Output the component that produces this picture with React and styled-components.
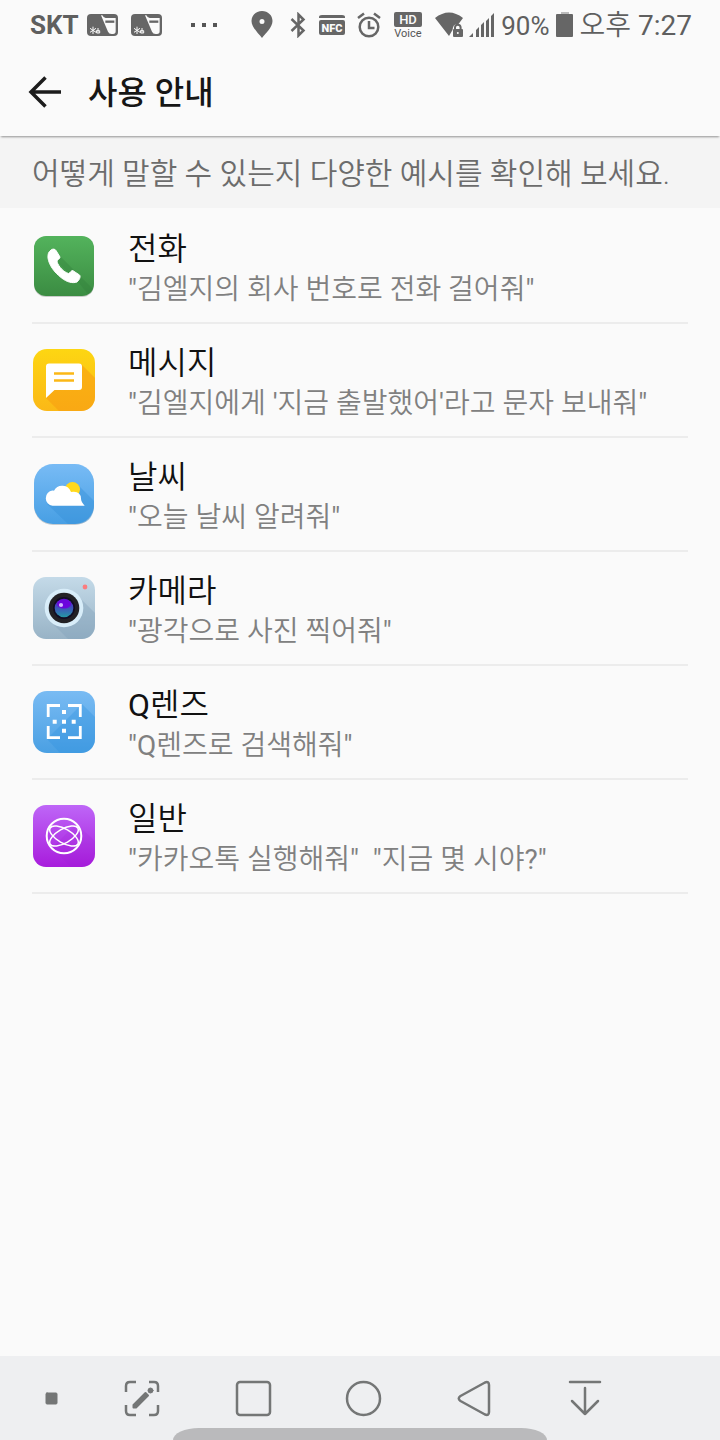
import React from 'react'
import styled, { createGlobalStyle } from 'styled-components'

const examples = [
  { id: 'phone', title: '전화', text: '"김엘지의 회사 번호로 전화 걸어줘"' },
  {
    id: 'message',
    title: '메시지',
    text: '"김엘지에게 \'지금 출발했어\'라고 문자 보내줘"',
  },
  { id: 'weather', title: '날씨', text: '"오늘 날씨 알려줘"' },
  { id: 'camera', title: '카메라', text: '"광각으로 사진 찍어줘"' },
  { id: 'qlens', title: 'Q렌즈', text: '"Q렌즈로 검색해줘"' },
  {
    id: 'general',
    title: '일반',
    text: '"카카오톡 실행해줘"\u00a0 "지금 몇 시야?"',
  },
]

const Gradient = ({ id, from, to }) => (
  <defs>
    <linearGradient id={id} x1='0' y1='0' x2='0' y2='1'>
      <stop offset='0' stopColor={from} />
      <stop offset='1' stopColor={to} />
    </linearGradient>
    <clipPath id={`${id}-clip`}>
      <rect x='1' y='1' width='62' height='62' rx='14' />
    </clipPath>
  </defs>
)

const appIcons = {
  phone: (
    <>
      <Gradient id='phone' from='#53b35c' to='#3b8c42' />
      <rect x='2' y='3' width='60' height='60' rx='12' fill='#c9cbc9' />
      <rect x='2' y='2' width='60' height='60' rx='12' fill='url(#phone)' />
      <path
        d='M27 21L61 55Q60 60 56 60L46 48L25 28Z'
        fill='#2f7a39'
        opacity='.3'
      />
      <path
        d='M19 16C21 14.5 23 15 24 16.5L28 23C28.5 24.5 24.5 26 25 28C27 33 31.5 38 36.5 39.5C38.5 39 39 36 41 36.7L47.5 41C49 42.5 47.5 46 45 48C41 49.5 35 48.5 29 43.5C22 38 17 31 16 24C15.7 20 16.5 18 19 16Z'
        fill='#fff'
        stroke='#fff'
        strokeLinejoin='round'
      />
    </>
  ),
  message: (
    <>
      <Gradient id='message' from='#fdd612' to='#fbb817' />
      <rect x='1' y='1' width='62' height='62' rx='14' fill='url(#message)' />
      <path
        d='M49 16L64 31V64H28L14 50L23 41Z'
        fill='#f99f12'
        opacity='.6'
        clipPath='url(#message-clip)'
      />
      <path
        d='M17 15.5H47Q50 15.5 50 18.500V39Q50 42 47 42H22.500L14 50V18.500Q14 15.500 17 15.500Z'
        fill='#fff'
      />
      <path d='M22 25.500H42M22 32.500H42' stroke='#fbb817' strokeWidth='2.500' />
    </>
  ),
  weather: (
    <>
      <Gradient id='weather' from='#78bbf5' to='#479fe4' />
      <rect x='2' y='3' width='60' height='60' rx='19' fill='#c5cbd0' />
      <rect x='2' y='2' width='60' height='60' rx='19' fill='url(#weather)' />
      <path
        d='M46 23L62 39V44Q61 62 44 62H36L15 42Z'
        fill='#348fd8'
        opacity='.4'
      />
      <circle cx='40.5' cy='27.500' r='7.500' fill='#ffd91c' />
      <path
        d='M20.500 43.700A7.600 7.600 0 0 1 20.500 28.600Q21 28.500 22 28.700A9.300 9.300 0 0 1 39 30Q48.500 28.500 49 36.500Q49 40 52.700 43.700Z'
        fill='#fff'
      />
    </>
  ),
  camera: (
    <>
      <Gradient id='camera' from='#c4dae8' to='#98b3c6' />
      <Gradient id='lens' from='#5b12d0' to='#2499a4' />
      <rect x='1' y='1' width='62' height='62' rx='13' fill='url(#camera)' />
      <path
        d='M45 19L64 38V64H37L18 45Z'
        fill='#7f9fb8'
        opacity='.35'
        clipPath='url(#camera-clip)'
      />
      <circle cx='32' cy='32' r='19.300' fill='#d8edf9' />
      <circle cx='32' cy='32' r='15.300' fill='#222125' />
      <circle cx='32' cy='32' r='11' fill='#120d25' />
      <circle cx='32' cy='32' r='9.300' fill='url(#lens)' />
      <ellipse cx='32' cy='28' rx='7' ry='4.500' fill='#6b05dd' />
      <circle cx='29' cy='29' r='2.100' fill='#d3b7ff' />
      <circle cx='53' cy='11' r='2.400' fill='#fb7c7e' />
    </>
  ),
  qlens: (
    <>
      <Gradient id='qlens' from='#79bbf3' to='#4aa0e3' />
      <rect x='1' y='1' width='62' height='62' rx='14' fill='url(#qlens)' />
      <path
        d='M50 14L64 28V64H29L15 49Z'
        fill='#3292df'
        opacity='.35'
        clipPath='url(#qlens-clip)'
      />
      <path
        d='M28 15.500H16.200V27M36 15.500H48.300V27M16.200 36V47.700H28M48.300 36V47.700H36'
        fill='none'
        stroke='#fff'
        strokeWidth='2.800'
      />
      <path
        d='M30 20h4v4h-4zM20.700 29.700h4v4h-4zM30 29.700h4v4h-4zM39.700 29.700h4v4h-4zM30 38.700h4v4h-4z'
        fill='#fff'
      />
    </>
  ),
  general: (
    <>
      <Gradient id='general' from='#be66f7' to='#a81cdc' />
      <rect x='1' y='1' width='62' height='62' rx='13' fill='url(#general)' />
      <path
        d='M44 20L63 37V64H40L20 44Z'
        fill='#9c1ad0'
        opacity='.15'
        clipPath='url(#general-clip)'
      />
      <g fill='none' stroke='#fff'>
        <circle cx='32' cy='32' r='17.300' strokeWidth='2' />
        <g strokeWidth='1.500'>
          <ellipse
            cx='32'
            cy='32'
            rx='16'
            ry='7'
            transform='rotate(30 32 32)'
          />
          <ellipse
            cx='32'
            cy='32'
            rx='16'
            ry='7'
            transform='rotate(-30 32 32)'
          />
        </g>
      </g>
    </>
  ),
}

const CardNotice = () => (
  <svg width='31' height='22' viewBox='0 0 93 66' aria-hidden='true'>
    <rect width='93' height='66' rx='12' fill='#666' />
    <path
      d='M42 4H46Q50 12 56 12H86V52Q86 60 78 60H74Q66 60 63 53Z'
      fill='#fafafa'
    />
    <path d='M55 23H82' stroke='#666' strokeWidth='7' />
    <path
      d='M18 38V60M9 43L27 55M27 43L9 55M33 42V56M28 50H38V57H29Z'
      fill='none'
      stroke='#fafafa'
      strokeWidth='3'
    />
  </svg>
)

const StatusIcons = () => (
  <Group $gap={12}>
    <svg width='28' height='28' viewBox='0 0 28 28' aria-hidden='true'>
      <path
        fillRule='evenodd'
        d='M13 0C7 0 2.500 4.400 2.500 10C2.500 16 9 22 13 27C17 22 23.500 16 23.500 10C23.500 4.400 19 0 13 0ZM13 8a2.500 2.500 0 1 1 0 5a2.500 2.500 0 0 1 0-5Z'
        fill='#666'
      />
    </svg>
    <svg width='18' height='26' viewBox='0 0 18 26' aria-hidden='true'>
      <path
        d='M2.500 7L14.500 18.500L9.500 23.500V2.500L14.500 7.500L2.500 19'
        fill='none'
        stroke='#666'
        strokeWidth='2.500'
      />
    </svg>
    <svg width='26' height='22' viewBox='0 0 26 22' aria-hidden='true'>
      <path d='M0 4V3Q0 1 3 1H23Q26 1 26 3V4Z' fill='#666' />
      <rect y='6' width='26' height='15' rx='2' fill='#666' />
      <text
        x='13'
        y='18'
        textAnchor='middle'
        fontSize='11'
        fontWeight='900'
        fill='#fafafa'
      >
        NFC
      </text>
    </svg>
    <svg width='24' height='26' viewBox='0 0 24 26' aria-hidden='true'>
      <g fill='none' stroke='#666' strokeWidth='2.500'>
        <circle cx='12' cy='15' r='9.300' />
        <path d='M1 6L7 1.500M17 1.500L23 6M12 9V16H17.500' />
      </g>
    </svg>
    <svg width='30' height='28' viewBox='0 0 30 28' aria-hidden='true'>
      <rect x='1' y='1' width='28' height='15' rx='2' fill='#666' />
      <text
        x='15'
        y='13'
        textAnchor='middle'
        fontSize='13'
        fontWeight='500'
        fill='#fafafa'
      >
        HD
      </text>
      <text x='15' y='26' textAnchor='middle' fontSize='11' fill='#555'>
        Voice
      </text>
    </svg>
    <Group $gap={6}>
      <svg width='28' height='26' viewBox='0 0 28 26' aria-hidden='true'>
        <path d='M0 6Q14 -5 28 6L23.500 12Q18 11 17.500 18L14 24Z' fill='#666' />
        <path
          d='M20 18V15.500A2.800 2.800 0 0 1 25.600 15.500V18'
          fill='none'
          stroke='#666'
          strokeWidth='2'
        />
        <rect x='18' y='17' width='10' height='8' rx='1' fill='#666' />
        <circle cx='22.800' cy='21' r='1' fill='#fafafa' />
      </svg>
      <svg width='26' height='26' viewBox='0 0 26 26' aria-hidden='true'>
        <path
          d='M0 25L4 21V25ZM7 18L10 15V25H7ZM12 13L15 10V25H12ZM17 9L20 6V25H17ZM22 4L25 1V25H22Z'
          fill='#666'
        />
      </svg>
      <StatusText $size={26}>90%</StatusText>
      <svg width='18' height='26' viewBox='0 0 18 26' aria-hidden='true'>
        <path d='M5 0H13V3H5Z' fill='#bbb' />
        <rect x='0' y='2' width='17' height='23' rx='1' fill='#666' />
      </svg>
      <StatusText $size={28}>오후 7:27</StatusText>
    </Group>
  </Group>
)

const navItems = [
  {
    label: '고정',
    icon: (
      <rect
        x='13'
        y='13'
        width='11'
        height='11'
        rx='1'
        fill='#747676'
        strokeWidth='1'
      />
    ),
  },
  {
    label: '화면 메모',
    icon: (
      <>
        <path
          d='M2 12V6Q2 2 6 2H12M25 2H30Q34 2 34 6V12M34 25V31Q34 35 30 35H25M12 35H6Q2 35 2 31V25'
          strokeLinecap='butt'
        />
        <path
          d='M9.500 25L21.500 13L24 15.500L12 27.500H9.500Z'
          fill='#747676'
          strokeWidth='2'
        />
        <circle cx='26.500' cy='10.500' r='2.500' fill='#747676' strokeWidth='1' />
      </>
    ),
  },
  {
    label: '최근 앱',
    icon: <rect x='2' y='2' width='33' height='33' rx='3' />,
  },
  { label: '홈', icon: <circle cx='18.500' cy='18.500' r='16.500' /> },
  {
    label: '뒤로',
    icon: (
      <path d='M4.500 16L29 2.500Q33 1 33 5V32Q33 36 29 34.500L4.500 21Q1 18.500 4.500 16Z' />
    ),
  },
  {
    label: '알림창 내리기',
    icon: <path d='M3 2H33M18 8V34M5 21L18 34L31 21' />,
  },
]

const App = () => {
  return (
    <>
      <GlobalStyle />
      <Page>
        <StatusBar>
          <Group $gap={8}>
            <Carrier>SKT</Carrier>
            <Group $gap={13}>
              <CardNotice />
              <CardNotice />
            </Group>
          </Group>
          <svg width='28' height='26' viewBox='0 0 28 26' aria-hidden='true'>
            <path
              d='M0 11h4v4H0zM11 11h4v4h-4zM22 11h4v4h-4z'
              fill='#555'
            />
          </svg>
          <StatusIcons />
        </StatusBar>

        <Header>
          <BackButton type='button' aria-label='뒤로'>
            <svg width='34' height='34' viewBox='0 0 34 34'>
              <path
                d='M33 16H3M17.500 1.500L3 16L17.500 30.500'
                fill='none'
                stroke='#1c1c1c'
                strokeWidth='3.500'
              />
            </svg>
          </BackButton>
          <Heading>사용 안내</Heading>
        </Header>

        <Notice>어떻게 말할 수 있는지 다양한 예시를 확인해 보세요.</Notice>

        <List>
          {examples.map((item) => (
            <li key={item.id}>
              <Row type='button'>
                <svg
                  width='64'
                  height='64'
                  viewBox='0 0 64 64'
                  aria-hidden='true'
                >
                  {appIcons[item.id]}
                </svg>
                <RowText>
                  <Title>{item.title}</Title>
                  <Example>{item.text}</Example>
                </RowText>
              </Row>
            </li>
          ))}
        </List>

        <NavBar>
          {navItems.map((item) => (
            <NavButton key={item.label} type='button' aria-label={item.label}>
              <svg
                width='37'
                height='37'
                viewBox='0 0 37 37'
                fill='none'
                stroke='#747676'
                strokeWidth='2.500'
                strokeLinecap='round'
                strokeLinejoin='round'
              >
                {item.icon}
              </svg>
            </NavButton>
          ))}
          <Handle />
        </NavBar>
      </Page>
    </>
  )
}

export default App

const GlobalStyle = createGlobalStyle`
  * {
    box-sizing: border-box;
  }

  body {
    margin: 0;
    background: #fafafa;
    font-family: Roboto, 'Noto Sans CJK KR DemiLight', 'Noto Sans CJK KR',
      sans-serif;
  }

  button {
    border: 0;
    padding: 0;
    background: none;
    font: inherit;
    color: inherit;
    cursor: pointer;
  }

  svg {
    display: block;
    flex-shrink: 0;
  }
`

const Page = styled.div`
  display: flex;
  flex-direction: column;
  min-height: 100vh;
`

const StatusBar = styled.div`
  display: flex;
  align-items: center;
  justify-content: space-between;
  height: 50px;
  padding: 0 28px 0 30px;
  color: #5f5f5f;
  white-space: nowrap;
`

const Group = styled.div`
  display: flex;
  align-items: center;
  gap: ${(props) => props.$gap}px;
`

const Carrier = styled.span`
  font-size: 26px;
  font-weight: 700;
  line-height: 32px;
`

const StatusText = styled.span`
  padding-top: 2px;
  font-size: ${(props) => props.$size}px;
  line-height: 32px;
`

const Header = styled.header`
  position: relative;
  display: flex;
  align-items: center;
  gap: 26px;
  height: 86px;
  padding: 0 28px;
  box-shadow: 0 2px 2px -1px rgba(0, 0, 0, 0.4);
`

const BackButton = styled.button`
  width: 34px;
`

const Heading = styled.h1`
  margin: 0;
  font-family: Roboto, 'Noto Sans CJK KR', sans-serif;
  font-size: 32px;
  font-weight: 500;
  line-height: 40px;
  color: #161616;
`

const Notice = styled.p`
  margin: 0;
  padding: 18px 32px 14px;
  background: #f4f4f4;
  color: #6c6c6c;
  font-size: 30px;
  font-weight: 300;
  line-height: 40px;
`

const List = styled.ul`
  flex: 1;
  margin: 0;
  padding: 2px 32px 0;
  list-style: none;
`

const Row = styled.button`
  display: flex;
  align-items: center;
  gap: 32px;
  width: 100%;
  height: 114px;
  border-bottom: 2px solid #ececec;
  text-align: left;
`

const RowText = styled.span`
  display: flex;
  flex-direction: column;
  padding-top: 6px;
`

const Title = styled.span`
  font-size: 32px;
  line-height: 42px;
  color: #111;
`

const Example = styled.span`
  font-size: 28px;
  line-height: 40px;
  color: #808080;
`

const NavBar = styled.nav`
  position: relative;
  display: grid;
  grid-template-columns: 70fr repeat(5, 111fr);
  height: 84px;
  padding: 0 79px 0 17px;
  overflow: hidden;
  background: #eeeff1;
`

const NavButton = styled.button`
  display: flex;
  align-items: center;
  justify-content: center;
`

const Handle = styled.div`
  position: absolute;
  right: 24%;
  bottom: 0;
  left: 24%;
  height: 12px;
  border-radius: 26px 26px 0 0 / 12px 12px 0 0;
  background: #bababc;
`
